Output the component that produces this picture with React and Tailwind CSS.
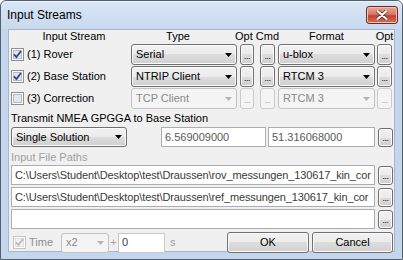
import React from "react";

const Check = ({ checked, disabled }) => (
  <svg width="13" height="13" viewBox="0 0 13 13" className="shrink-0">
    <rect x="0.5" y="0.5" width="12" height="12" fill="#ffffff" stroke={disabled ? "#c5c5c5" : "#8e8f8f"} />
    <rect x="2.5" y="2.5" width="8" height="8" fill={disabled ? "#f4f4f4" : "#e2e7ee"} stroke={disabled ? "#dcdcdc" : "#b4bcc6"} />
    {checked && (
      <path d="M3 6.3 L5.4 9 L10 3" fill="none" stroke={disabled ? "#b9b9b9" : "#31468a"} strokeWidth="1.8" />
    )}
  </svg>
);

const Arrow = ({ disabled }) => (
  <svg width="7" height="4" viewBox="0 0 7 4" className="shrink-0">
    <polygon points="0,0 7,0 3.5,4" fill={disabled ? "#b5b5b5" : "#000000"} />
  </svg>
);

const Combo = ({ className, text, disabled }) => (
  <div
    className={
      (disabled
        ? "border-[#c3c3c3] bg-[#f4f4f4] text-[#8a8a8a] "
        : "border-[#707070] bg-[linear-gradient(to_bottom,#f2f2f2_0%,#ebebeb_50%,#dddddd_50%,#cfcfcf_100%)] shadow-[inset_0_0_0_1px_#fbfbfb] text-black ") +
      "flex items-center justify-between rounded-[3px] border pl-[4px] pr-[4px] shrink-0 " +
      className
    }
  >
    <span className="whitespace-nowrap">{text}</span>
    <Arrow disabled={disabled} />
  </div>
);

const Btn = ({ className, disabled, children }) => (
  <div
    className={
      (disabled
        ? "border-[#c9cbcd] bg-[#f4f4f4] text-[#a8a8a8] "
        : "border-[#707070] bg-[linear-gradient(to_bottom,#f2f2f2_0%,#ebebeb_50%,#dddddd_50%,#cfcfcf_100%)] shadow-[inset_0_0_0_1px_#fbfbfb] text-black ") +
      "flex items-center justify-center rounded-[3px] border shrink-0 " +
      className
    }
  >
    {children}
  </div>
);

const Dots = ({ className, disabled }) => (
  <Btn className={className} disabled={disabled}>
    <span className="text-[9px] leading-[9px] tracking-[-0.5px] pt-[3px]">...</span>
  </Btn>
);

const Edit = ({ className, text, dim }) => (
  <div
    className={
      "flex items-center border border-[#abadb3] bg-white pl-[3px] overflow-hidden shrink-0 " +
      (dim ? "text-[#5a5a5a] " : "text-[#3a3a3a] ") +
      className
    }
  >
    <span className="whitespace-nowrap">{text}</span>
  </div>
);

const StreamRow = ({ checked, label, type, format, disabled }) => (
  <div className="flex items-center h-[21px] pl-[2px] mt-[1px]">
    <div className="flex items-center w-[120px]">
      <Check checked={checked} />
      <span className="ml-[3px] whitespace-nowrap">{label}</span>
    </div>
    <Combo className="w-[106px] h-[21px]" text={type} disabled={disabled} />
    <Dots className="ml-[3px] w-[14px] h-[21px]" disabled={disabled} />
    <Dots className="ml-[6px] w-[15px] h-[21px]" disabled={disabled} />
    <Combo className="ml-[3px] w-[97px] h-[21px]" text={format} disabled={disabled} />
    <Dots className="ml-[2px] w-[15px] h-[21px]" disabled={disabled} />
  </div>
);

export default function App() {
  return (
    <div className="w-[403px] h-[260px] overflow-hidden font-['Liberation_Sans',Arial,sans-serif] text-[11px] leading-[13px] text-black">
      <div className="w-[403px] h-[260px] flex flex-col rounded-t-[6px] border border-[#55606f] bg-[#c4d6ed]">
        {/* title bar */}
        <div className="h-[28px] flex items-center justify-between bg-[linear-gradient(to_bottom,#d9e6f5_0%,#c8d9ef_100%)] rounded-t-[6px] shadow-[inset_0_1px_0_#eef4fb]">
          <span className="ml-[6px] text-[12px] leading-[14px] text-black mt-[-1px]">Input Streams</span>
          <div className="mr-[4px] mt-[0px] w-[32px] h-[18px] rounded-[3px] border border-[#6b2e25] bg-[linear-gradient(to_bottom,#e8a898_0%,#d87868_45%,#c2402f_55%,#d6725c_100%)] shadow-[inset_0_0_0_1px_#f0c0b4] flex items-center justify-center">
            <svg width="12" height="10" viewBox="0 0 12 10">
              <path d="M1.5 1 L10.5 9 M10.5 1 L1.5 9" stroke="#5b2a24" strokeWidth="3.6" strokeLinecap="round" />
              <path d="M1.5 1 L10.5 9 M10.5 1 L1.5 9" stroke="#ffffff" strokeWidth="2.2" strokeLinecap="round" />
            </svg>
          </div>
        </div>
        {/* client area */}
        <div className="mx-[7px] h-[223px] border border-[#a7b7ca] bg-[#f0f0f0] flex flex-col">
          {/* header */}
          <div className="flex h-[13px] pl-[2px] whitespace-nowrap">
            <div className="w-[120px] pl-[6px] text-center">Input Stream</div>
            <div className="w-[94px] text-center">Type</div>
            <div className="w-[10px]" />
            <div className="w-[43px]">Opt Cmd</div>
            <div className="w-[97px] text-center">Format</div>
            <div className="w-[19px] text-center">Opt</div>
          </div>
          <StreamRow checked label="(1) Rover" type="Serial" format="u-blox" />
          <StreamRow checked label="(2) Base Station" type="NTRIP Client" format="RTCM 3" />
          <StreamRow label="(3) Correction" type="TCP Client" format="RTCM 3" disabled />

          <div className="pl-[2px] mt-[3px] h-[13px] whitespace-nowrap">Transmit NMEA GPGGA to Base Station</div>
          <div className="flex items-center pl-[2px] mt-[2px] h-[20px]">
            <Combo className="w-[116px] h-[20px]" text="Single Solution" />
            <Edit className="ml-[34px] w-[105px] h-[20px]" text="6.569009000" dim />
            <Edit className="ml-[2px] w-[107px] h-[20px]" text="51.316068000" dim />
            <Dots className="ml-[3px] w-[15px] h-[19px]" />
          </div>

          <div className="pl-[2px] mt-[4px] h-[13px] text-[#a0a0a0] whitespace-nowrap">Input File Paths</div>
          <div className="flex items-center pl-[2px] mt-[1px] h-[20px]">
            <Edit className="w-[364px] h-[20px] tracking-[-0.12px]" text="C:\Users\Student\Desktop\test\Draussen\rov_messungen_130617_kin_cor" />
            <Dots className="ml-[3px] w-[15px] h-[19px]" />
          </div>
          <div className="flex items-center pl-[2px] mt-[2px] h-[20px]">
            <Edit className="w-[364px] h-[20px] tracking-[-0.12px]" text="C:\Users\Student\Desktop\test\Draussen\ref_messungen_130617_kin_cor" />
            <Dots className="ml-[3px] w-[15px] h-[19px]" />
          </div>
          <div className="flex items-center pl-[2px] mt-[2px] h-[20px]">
            <Edit className="w-[364px] h-[20px]" text="" />
            <Dots className="ml-[3px] w-[15px] h-[19px]" />
          </div>

          <div className="flex items-center pl-[4px] mt-[3px] h-[21px]">
            <div className="flex items-center w-[48px]">
              <Check checked disabled />
              <span className="ml-[3px] text-[#8d8d8d]">Time</span>
            </div>
            <Combo className="w-[48px] h-[20px]" text="x2" disabled />
            <span className="w-[9px] text-center text-[#a0a0a0]">+</span>
            <Edit className="w-[47px] h-[20px] border-[#c9c9c9]" text="0" />
            <span className="ml-[5px] text-[#a0a0a0]">s</span>
            <div className="flex-1" />
            <Btn className="w-[82px] h-[21px]">OK</Btn>
            <Btn className="ml-[3px] mr-[1px] w-[81px] h-[21px]">Cancel</Btn>
          </div>
        </div>
      </div>
    </div>
  );
}
